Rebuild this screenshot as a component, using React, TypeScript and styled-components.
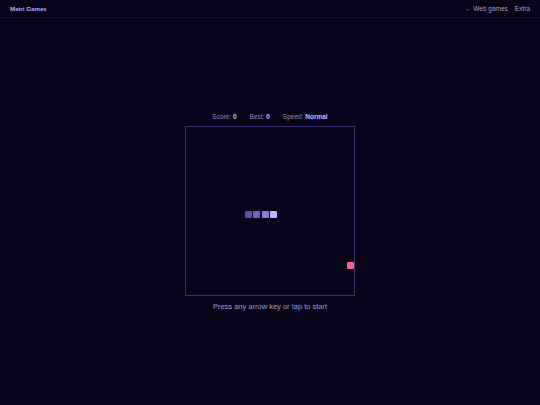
import React from "react";
import styled, { createGlobalStyle } from "styled-components";

const GlobalStyle = createGlobalStyle`
  html, body {
    margin: 0;
    padding: 0;
    background: #07041a;
    font-family: "Liberation Sans", Arial, sans-serif;
  }
  #root {
    min-height: 100vh;
  }
`;

const COLS = 20;
const CELL = 8.4;

const snake = [
  { x: 7, y: 10, color: "#5f4ea3" },
  { x: 8, y: 10, color: "#7262b9" },
  { x: 9, y: 10, color: "#8a78d6" },
  { x: 10, y: 10, color: "#c2b4fb" },
];
const food = { x: 19, y: 16 };

export default function App() {
  return (
    <>
      <GlobalStyle />
      <Page>
        <Header>
          <Brand>Meiri Games</Brand>
          <Nav>
            <NavLink>← Web games</NavLink>
            <NavLink>Extra</NavLink>
          </Nav>
        </Header>
        <Main>
          <Stats>
            <Stat>
              Score: <Value>0</Value>
            </Stat>
            <Stat>
              Best: <Value>0</Value>
            </Stat>
            <Stat>
              Speed: <Value>Normal</Value>
            </Stat>
          </Stats>
          <Board>
            {snake.map((s, i) => (
              <Cell
                key={i}
                $color={s.color}
                style={{ left: s.x * CELL, top: s.y * CELL }}
              />
            ))}
            <Cell
              $color="#f0658b"
              style={{ left: food.x * CELL + 1, top: food.y * CELL + 1 }}
            />
          </Board>
          <Hint>Press any arrow key or tap to start</Hint>
        </Main>
      </Page>
    </>
  );
}

const Page = styled.div`
  display: flex;
  flex-direction: column;
  min-height: 100vh;
`;

const Header = styled.header`
  display: flex;
  justify-content: space-between;
  align-items: center;
  height: 18px;
  padding: 0 10px;
  border-bottom: 1px solid #16112e;
  box-sizing: border-box;
`;

const Brand = styled.span`
  font-size: 6.2px;
  font-weight: 700;
  color: #b9acef;
`;

const Nav = styled.nav`
  display: flex;
  gap: 7px;
`;

const NavLink = styled.span`
  font-size: 6.5px;
  color: #a59dc6;
`;

const Main = styled.main`
  flex: 1;
  display: flex;
  flex-direction: column;
  align-items: center;
  justify-content: center;
  gap: 6px;
`;

const Stats = styled.div`
  display: flex;
  gap: 13px;
  font-size: 6.5px;
  color: #958cbc;
`;

const Stat = styled.span``;

const Value = styled.b`
  color: #c9bbff;
`;

const Board = styled.div`
  position: relative;
  width: ${COLS * CELL}px;
  height: ${COLS * CELL}px;
  border: 1px solid #393072;
  background: #07041a;
`;

const Cell = styled.div<{ $color: string }>`
  position: absolute;
  width: 7px;
  height: 7px;
  border-radius: 1px;
  background: ${(p) => p.$color};
`;

const Hint = styled.p`
  margin: 0;
  font-size: 7.5px;
  color: #a199c2;
`;
